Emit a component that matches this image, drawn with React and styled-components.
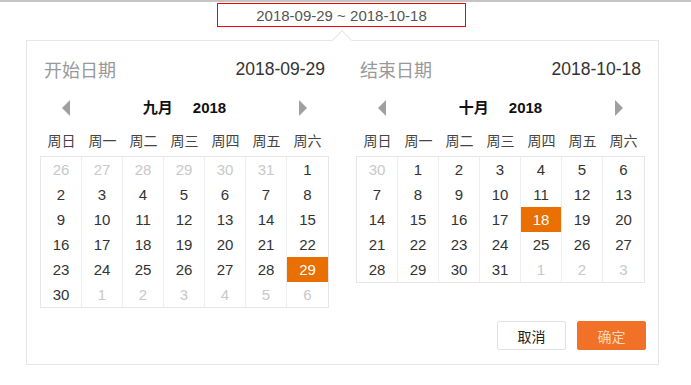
import React from 'react';
import styled, { createGlobalStyle } from 'styled-components';

const GlobalStyle = createGlobalStyle`
  html, body {
    margin: 0;
    padding: 0;
    background: #fff;
  }
  body {
    font-family: "Liberation Sans", "Noto Sans CJK SC", sans-serif;
    color: #333;
  }
`;

const Page = styled.div`
  width: 691px;
  height: 385px;
  border-top: 2px solid #c4c4c4;
  box-sizing: border-box;
  overflow: hidden;
`;

const RangeInput = styled.div`
  margin: 1px 0 0 217px;
  width: 249px;
  height: 24px;
  box-sizing: border-box;
  border: 1px solid #f00;
  display: flex;
  align-items: center;
  justify-content: center;
  font-size: 15px;
  color: #555;
`;

const Popup = styled.div`
  position: relative;
  margin: 13px 0 0 26px;
  width: 633px;
  height: 325px;
  box-sizing: border-box;
  border: 1px solid #e6e6e6;
  padding: 13px 12px 14px 13px;
  display: flex;
  flex-direction: column;
`;

const Caret = styled.div`
  position: absolute;
  top: -8px;
  left: 308px;
  width: 13px;
  height: 13px;
  background: #fff;
  border-top: 1px solid #e6e6e6;
  border-left: 1px solid #e6e6e6;
  transform: rotate(45deg);
`;

const Panels = styled.div`
  display: flex;
  gap: 27px;
`;

const Panel = styled.div`
  width: 289px;
  display: flex;
  flex-direction: column;
`;

const Header = styled.div`
  height: 30px;
  padding: 0 4px;
  display: flex;
  align-items: center;
  justify-content: space-between;
  font-size: 17.5px;
`;

const Label = styled.span`
  color: #999;
  font-size: 18px;
`;

const DateText = styled.span`
  color: #333;
`;

const Nav = styled.div`
  margin-top: 12px;
  height: 24px;
  padding: 0 22px;
  display: flex;
  align-items: center;
  justify-content: space-between;
`;

const Arrow = styled.span`
  width: 0;
  height: 0;
  border-top: 8px solid transparent;
  border-bottom: 8px solid transparent;
  ${(p) => (p.$dir === 'left' ? 'border-right: 8px solid #a0a0a0;' : 'border-left: 8px solid #a0a0a0;')}
  cursor: pointer;
`;

const MonthTitle = styled.div`
  display: flex;
  align-items: baseline;
  gap: 20px;
  font-size: 15px;
  line-height: 20px;
  font-weight: bold;
  color: #111;
`;

const Weekdays = styled.div`
  margin-top: 8px;
  height: 24px;
  display: grid;
  grid-template-columns: repeat(7, 41px);
  padding: 0 1px;
`;

const Weekday = styled.span`
  display: flex;
  align-items: center;
  justify-content: center;
  font-size: 14px;
  color: #444;
`;

const Grid = styled.div`
  margin-top: 4px;
  border: 1px solid #e6e6e6;
  display: grid;
  grid-template-columns: repeat(7, 41px);
`;

const Cell = styled.span`
  height: 25px;
  display: flex;
  align-items: center;
  justify-content: center;
  font-size: 15px;
  box-sizing: border-box;
  border-right: 1px solid #eee;
  color: ${(p) => (p.$muted ? '#c8c8c8' : '#333')};
  background: ${(p) => (p.$selected ? '#e86f00' : 'transparent')};
  ${(p) => p.$selected && 'color: #fff;'}
  &:nth-child(7n) {
    border-right: none;
  }
`;

const Footer = styled.div`
  margin-top: auto;
  display: flex;
  justify-content: flex-end;
  gap: 11px;
`;

const Button = styled.button`
  width: 69px;
  height: 29px;
  box-sizing: border-box;
  border-radius: 2px;
  font-family: "Liberation Sans", "Noto Sans CJK SC", sans-serif;
  font-size: 14px;
  cursor: pointer;
  border: 1px solid ${(p) => (p.$primary ? '#f07127' : '#e2e2e2')};
  background: ${(p) => (p.$primary ? '#f07127' : '#fff')};
  color: ${(p) => (p.$primary ? '#ffd7b8' : '#222')};
`;

const WEEK = ['周日', '周一', '周二', '周三', '周四', '周五', '周六'];

function buildDays(prevEnd, startWeekday, length, rows) {
  const days = [];
  for (let i = startWeekday - 1; i >= 0; i--) days.push({ d: prevEnd - i, muted: true });
  for (let d = 1; d <= length; d++) days.push({ d, muted: false });
  let n = 1;
  while (days.length < rows * 7) days.push({ d: n++, muted: true });
  return days;
}

const calendars = [
  { label: '开始日期', date: '2018-09-29', month: '九月', days: buildDays(31, 6, 30, 6), selected: 29 },
  { label: '结束日期', date: '2018-10-18', month: '十月', days: buildDays(30, 1, 31, 5), selected: 18 },
];

const Calendar = ({ label, date, month, days, selected }) => (
  <Panel>
    <Header>
      <Label>{label}</Label>
      <DateText>{date}</DateText>
    </Header>
    <Nav>
      <Arrow $dir="left" />
      <MonthTitle>
        <span>{month}</span>
        <span>2018</span>
      </MonthTitle>
      <Arrow $dir="right" />
    </Nav>
    <Weekdays>
      {WEEK.map((w) => (
        <Weekday key={w}>{w}</Weekday>
      ))}
    </Weekdays>
    <Grid>
      {days.map((item, i) => (
        <Cell key={i} $muted={item.muted} $selected={!item.muted && item.d === selected}>
          {item.d}
        </Cell>
      ))}
    </Grid>
  </Panel>
);

const App = () => (
  <Page>
    <GlobalStyle />
    <RangeInput>2018-09-29 ~ 2018-10-18</RangeInput>
    <Popup>
      <Caret />
      <Panels>
        {calendars.map((c) => (
          <Calendar key={c.label} {...c} />
        ))}
      </Panels>
      <Footer>
        <Button>取消</Button>
        <Button $primary>确定</Button>
      </Footer>
    </Popup>
  </Page>
);

export default App;
